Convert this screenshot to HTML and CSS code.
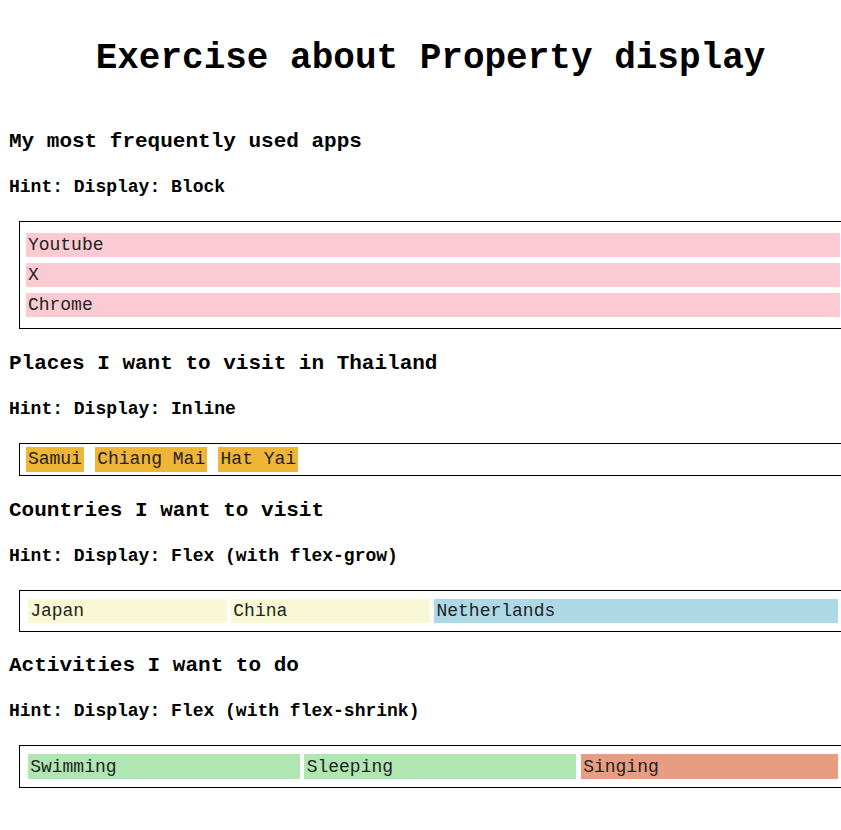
FILE: index.html
```html
<!DOCTYPE html>
<html lang="en">
<head>
<meta charset="utf-8">
<title>Exercise about Property display</title>
<link rel="stylesheet" href="styles.css">
</head>
<body>
<h1 class="title">Exercise about Property display</h1>

<section class="exercise">
  <h3 class="exercise-title">My most frequently used apps</h3>
  <h4 class="hint">Hint: Display: Block</h4>
  <div class="box">
    <span class="app">Youtube</span>
    <span class="app">X</span>
    <span class="app">Chrome</span>
  </div>
</section>

<section class="exercise">
  <h3 class="exercise-title">Places I want to visit in Thailand</h3>
  <h4 class="hint">Hint: Display: Inline</h4>
  <div class="box">
    <span class="place">Samui</span>
    <span class="place">Chiang Mai</span>
    <span class="place">Hat Yai</span>
  </div>
</section>

<section class="exercise">
  <h3 class="exercise-title">Countries I want to visit</h3>
  <h4 class="hint">Hint: Display: Flex (with flex-grow)</h4>
  <div class="box box-flex">
    <div class="country">Japan</div>
    <div class="country">China</div>
    <div class="country country-wide">Netherlands</div>
  </div>
</section>

<section class="exercise">
  <h3 class="exercise-title">Activities I want to do</h3>
  <h4 class="hint">Hint: Display: Flex (with flex-shrink)</h4>
  <div class="box box-flex">
    <div class="activity">Swimming</div>
    <div class="activity">Sleeping</div>
    <div class="activity activity-last">Singing</div>
  </div>
</section>
</body>
</html>
```

FILE: styles.css
```css
html {
  overflow-x: hidden;
}

body {
  margin: 0;
  padding: 9px;
  font-family: "Liberation Mono", "Courier New", monospace;
  font-size: 18px;
  color: #000;
  background: #fff;
}

.title {
  font-size: 36px;
  font-weight: bold;
  text-align: center;
  margin: 29px 0 50.7px;
  padding-left: 20px;
}

.exercise-title {
  font-size: 21px;
  font-weight: bold;
  margin: 22.5px 0 21px;
}

.hint {
  font-size: 18px;
  font-weight: bold;
  margin: 24px 0;
}

.box {
  box-sizing: border-box;
  width: calc(100% + 4.7px);
  margin: 0 0 22px 10px;
  padding: 5.625px;
  border: 1px solid #000;
  color: #222;
}

.app {
  display: block;
  margin: 5.5px 0;
  padding: 2.25px;
  background: #fccad3;
}

.place {
  padding: 2.25px;
  background: #eeb537;
}

.box-flex {
  display: flex;
}

.country {
  flex: 1 1 auto;
  margin: 2.25px;
  padding: 2.25px;
  background: #f8f8d4;
}

.country-wide {
  flex: 2 1 auto;
  background: #add8e6;
}

.activity {
  box-sizing: border-box;
  flex: 0 1 272px;
  margin: 2.25px;
  padding: 2.25px;
  background: #afe6b1;
}

.activity-last {
  flex: 1 1 256px;
  background: #e89d83;
}
```
